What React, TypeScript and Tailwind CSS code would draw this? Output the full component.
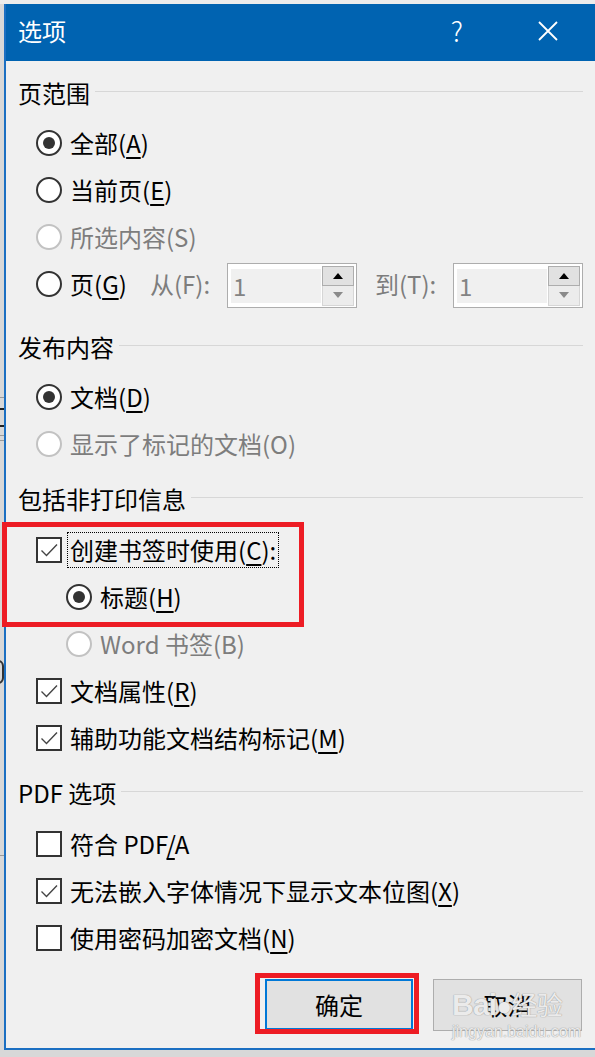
import React from 'react';

const font = "font-['Microsoft_YaHei','Noto_Sans_CJK_SC',sans-serif]";

const Radio: React.FC<{ checked?: boolean; disabled?: boolean }> = ({ checked, disabled }) => (
  <span
    className={`w-[26px] h-[26px] rounded-full border-2 bg-white flex items-center justify-center shrink-0 ${
      disabled ? 'border-[#c2c2c2]' : 'border-[#333333]'
    }`}
  >
    {checked && <span className="w-[12px] h-[12px] rounded-full bg-[#333333]" />}
  </span>
);

const Check: React.FC<{ checked?: boolean }> = ({ checked }) => (
  <span className="w-[26px] h-[26px] border-2 border-[#333333] bg-white flex items-center justify-center shrink-0">
    {checked && (
      <svg width="22" height="22" viewBox="0 0 22 22" fill="none">
        <path d="M3.5 11.5 L8.5 16.5 L19 5.5" stroke="#444444" strokeWidth="1.4" />
      </svg>
    )}
  </span>
);

const U: React.FC<{ children: React.ReactNode }> = ({ children }) => (
  <span className="underline underline-offset-[4px] decoration-[1.5px]">{children}</span>
);

const Header: React.FC<{ title: string; className?: string }> = ({ title, className }) => (
  <div className={`h-[47px] flex items-center pl-[12px] pr-[12px] ${className || ''}`}>
    <span className="text-black">{title}</span>
    <div className="flex-1 h-px bg-[#d7d7d7] ml-[5px] mt-[-2px]" />
  </div>
);

const Row: React.FC<{ children: React.ReactNode; className?: string; indent?: boolean }> = ({
  children,
  className,
  indent,
}) => (
  <div className={`h-[47px] flex items-center gap-[8px] ${indent ? 'pl-[60px]' : 'pl-[30px]'} ${className || ''}`}>
    {children}
  </div>
);

const Spin: React.FC = () => (
  <div className="w-[130px] h-[45px] mt-[4px] border border-[#adadad] bg-white flex items-center pl-[3px] pr-[2px] gap-[1px]">
    <div className="flex-1 h-[34px] bg-[#f0f0f0] flex items-center pl-[2px] text-[#838383]">1</div>
    <div className="w-[32px] h-[40px] flex flex-col">
      <div className="h-[20px] border border-[#adadad] bg-[#e1e1e1] flex items-center justify-center">
        <svg width="10" height="6" viewBox="0 0 10 6">
          <path d="M0 6 L5 0 L10 6 Z" fill="#000" />
        </svg>
      </div>
      <div className="h-[20px] border border-[#d6d6d6] border-t-0 bg-[#ececec] flex items-center justify-center">
        <svg width="10" height="6" viewBox="0 0 10 6">
          <path d="M0 0 L10 0 L5 6 Z" fill="#8a8a8a" />
        </svg>
      </div>
    </div>
  </div>
);

export default function App() {
  return (
    <div className={`relative w-[595px] h-[1057px] overflow-hidden bg-[#d8d8d8] ${font} text-[24px] leading-none`}>
      {/* background bits left of the dialog */}
      <div className="absolute left-0 top-0 w-[595px] h-[4px] bg-[#ececec]" />
      <div className="absolute left-0 top-[397px] w-[4px] h-px bg-[#9a9a9a]" />
      <div className="absolute left-0 top-[408px] w-[4px] h-[2px] bg-[#222]" />
      <div className="absolute left-0 top-[425px] w-[4px] h-[2px] bg-[#222]" />
      <div className="absolute left-0 top-[435px] w-[4px] h-px bg-[#9a9a9a]" />
      <div className="absolute left-0 top-[440px] w-[4px] h-px bg-[#9a9a9a]" />
      <div className="absolute left-[-8px] top-[660px] w-[12px] h-[24px] rounded-full border-2 border-[#333]" />
      <div className="absolute left-0 top-[855px] w-[4px] h-px bg-[#9a9a9a]" />

      <div className="pt-[4px] pl-[4px]">
        <div className="border-l-2 border-b-2 border-[#1b6fc2] bg-[#f0f0f0]">
          {/* title bar */}
          <div className="h-[57px] bg-[#0063b1] flex items-center text-white">
            <span className="pl-[12px] text-[24px] mt-[-4px]">选项</span>
            <span className="flex-1" />
            <span className="text-[27px] font-light mt-[-4px]">?</span>
            <svg className="ml-[75px] mr-[37px] mt-[-4px]" width="20" height="20" viewBox="0 0 20 20">
              <path d="M1 1 L19 19 M19 1 L1 19" stroke="#fff" strokeWidth="1.8" />
            </svg>
          </div>

          <Header title="页范围" className="mt-[8px]" />
          <Row className="mt-[3px]">
            <Radio checked />
            <span>
              全部(<U>A</U>)
            </span>
          </Row>
          <Row>
            <Radio />
            <span>
              当前页(<U>E</U>)
            </span>
          </Row>
          <Row>
            <Radio disabled />
            <span className="text-[#7d7d7d]">所选内容(S)</span>
          </Row>
          <Row>
            <Radio />
            <span className="w-[72px]">
              页(<U>G</U>)
            </span>
            <span className="w-[69px] text-[#7d7d7d]">从(F):</span>
            <Spin />
            <span className="ml-[10px] w-[70px] text-[#7d7d7d]">到(T):</span>
            <Spin />
          </Row>

          <Header title="发布内容" className="mt-[16px]" />
          <Row className="mt-[3px]">
            <Radio checked />
            <span>
              文档(<U>D</U>)
            </span>
          </Row>
          <Row>
            <Radio disabled />
            <span className="text-[#7d7d7d]">显示了标记的文档(O)</span>
          </Row>

          <Header title="包括非打印信息" className="mt-[8px]" />
          <Row className="mt-[4px]">
            <Check checked />
            <span className="border border-dotted border-black px-[2px] py-[5px] ml-[-3px]">
              创建书签时使用(<U>C</U>):
            </span>
          </Row>
          <Row indent>
            <Radio checked />
            <span>
              标题(<U>H</U>)
            </span>
          </Row>
          <Row indent>
            <Radio disabled />
            <span className="text-[#7d7d7d]">Word 书签(B)</span>
          </Row>
          <Row>
            <Check checked />
            <span>
              文档属性(<U>R</U>)
            </span>
          </Row>
          <Row>
            <Check checked />
            <span>
              辅助功能文档结构标记(<U>M</U>)
            </span>
          </Row>

          <Header title="PDF 选项" className="mt-[8px]" />
          <Row className="mt-[4px]">
            <Check />
            <span>
              符合 PDF<U>/</U>A
            </span>
          </Row>
          <Row>
            <Check checked />
            <span>
              无法嵌入字体情况下显示文本位图(<U>X</U>)
            </span>
          </Row>
          <Row>
            <Check />
            <span>
              使用密码加密文档(<U>N</U>)
            </span>
          </Row>

          <div className="mt-[18px] pb-[17px] flex justify-end gap-[20px] pr-[13px]">
            <button className="w-[148px] h-[51px] border-2 border-[#0078d7] bg-[#e1e1e1] flex items-center justify-center text-black">
              确定
            </button>
            <button className="w-[149px] h-[52px] border border-[#adadad] bg-[#e1e1e1] flex items-center justify-center text-black">
              取消
            </button>
          </div>
        </div>
      </div>

      {/* red annotation boxes */}
      <div className="absolute left-[2px] top-[522px] w-[302px] h-[105px] border-[5px] border-[#ed1c24]" />
      <div className="absolute left-[255px] top-[973px] w-[164px] h-[61px] border-[5px] border-[#ed1c24]" />

      {/* watermark */}
      <div className="absolute left-[452px] top-[990px] flex flex-col items-start text-white/80 [text-shadow:0_0_1px_#9a9a9a,0_0_1px_#9a9a9a]">
        <span className="text-[30px] font-['Liberation_Sans',sans-serif] font-bold tracking-tight">
          Bai<span className="text-[26px]">●</span>
          <span className={`${font} text-[26px] font-normal`}>经验</span>
        </span>
        <span className="text-[16px] font-['Liberation_Sans',sans-serif] mt-[4px]">jingyan.baidu.com</span>
      </div>
    </div>
  );
}
